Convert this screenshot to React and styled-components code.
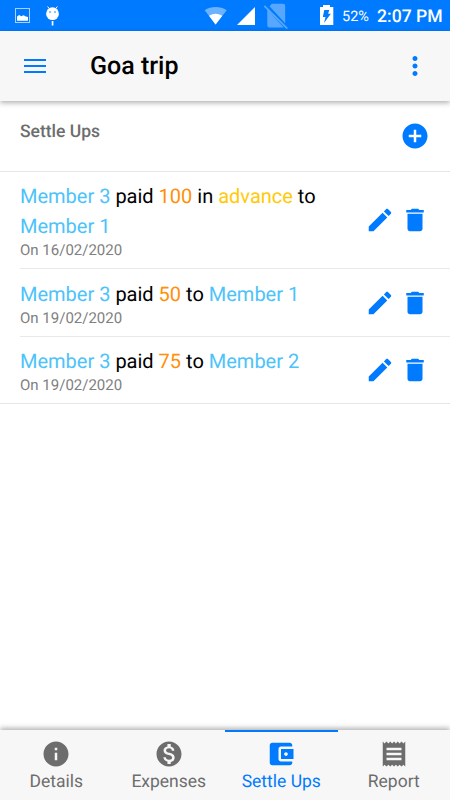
import React from "react";
import styled, { createGlobalStyle } from "styled-components";

const settleUps = [
  { from: "Member 3", amount: 100, advance: true, to: "Member 1", date: "16/02/2020" },
  { from: "Member 3", amount: 50, to: "Member 1", date: "19/02/2020" },
  { from: "Member 3", amount: 75, to: "Member 2", date: "19/02/2020" },
];

const icons = {
  add: "M12 2C6.48 2 2 6.48 2 12s4.48 10 10 10 10-4.48 10-10S17.52 2 12 2zm5 11h-4v4h-2v-4H7v-2h4V7h2v4h4v2z",
  more: "M12 8c1.1 0 2-.9 2-2s-.9-2-2-2-2 .9-2 2 .9 2 2 2zm0 2c-1.1 0-2 .9-2 2s.9 2 2 2 2-.9 2-2-.9-2-2-2zm0 6c-1.1 0-2 .9-2 2s.9 2 2 2 2-.9 2-2-.9-2-2-2z",
  edit: "M3 17.25V21h3.75L17.81 9.94l-3.75-3.75L3 17.25zM20.71 7.04c.39-.39.39-1.02 0-1.41l-2.34-2.34c-.39-.39-1.02-.39-1.41 0l-1.83 1.83 3.75 3.75 1.83-1.83z",
  trash: "M6 19c0 1.1.9 2 2 2h8c1.1 0 2-.9 2-2V7H6v12zM19 4h-3.5l-1-1h-5l-1 1H5v2h14V4z",
  info: "M12 2C6.48 2 2 6.48 2 12s4.48 10 10 10 10-4.48 10-10S17.52 2 12 2zm1 15h-2v-6h2v6zm0-8h-2V7h2v2z",
  money: "M12 2C6.48 2 2 6.48 2 12s4.48 10 10 10 10-4.48 10-10S17.52 2 12 2zm1.41 16.09V20h-2.67v-1.93c-1.71-.36-3.16-1.46-3.27-3.4h1.96c.1 1.05.82 1.87 2.65 1.87 1.96 0 2.4-.98 2.4-1.59 0-.83-.44-1.61-2.67-2.14-2.48-.6-4.18-1.62-4.18-3.67 0-1.72 1.39-2.84 3.11-3.21V4h2.67v1.95c1.86.45 2.79 1.86 2.85 3.39H14.3c-.05-1.11-.64-1.87-2.22-1.87-1.5 0-2.4.68-2.4 1.64 0 .84.65 1.39 2.67 1.94s4.18 1.36 4.18 3.85c0 1.8-1.36 3.16-3.12 3.53z",
  wallet: "M21 18v1c0 1.1-.9 2-2 2H5c-1.11 0-2-.9-2-2V5c0-1.1.89-2 2-2h14c1.1 0 2 .9 2 2v1h-9c-1.11 0-2 .9-2 2v8c0 1.1.89 2 2 2h9zm-9-2h10V8H12v8zm4-2.5c-.83 0-1.5-.67-1.5-1.5s.67-1.5 1.5-1.5 1.5.67 1.5 1.5-.67 1.5-1.5 1.5z",
  receipt: "M18 17H6v-2h12v2zm0-4H6v-2h12v2zm0-4H6V7h12v2zM3 22l1.5-1.5L6 22l1.5-1.5L9 22l1.5-1.5L12 22l1.5-1.5L15 22l1.5-1.5L18 22l1.5-1.5L21 22V2l-1.5 1.5L18 2l-1.5 1.5L15 2l-1.5 1.5L12 2l-1.5 1.5L9 2 7.5 3.5 6 2 4.5 3.5 3 2v20z",
};

const tabs = [
  { label: "Details", icon: "info" },
  { label: "Expenses", icon: "money" },
  { label: "Settle Ups", icon: "wallet", active: true },
  { label: "Report", icon: "receipt" },
];

const Icon = ({ name }) => (
  <StyledIcon viewBox="0 0 24 24">
    <path d={icons[name]} />
  </StyledIcon>
);

const StatusBar = () => (
  <StyledStatus>
    <StyledNotices width="60" height="31" viewBox="0 0 60 31">
      <rect x="15.5" y="8.5" width="14" height="14" fill="none" stroke="#a9d0ff" />
      <path d="M17 20.8v-4.3l2.2-1.6 2 1.4 2.4-1.1 2.2 1.3 2.2.4v3.9z" />
      <path d="M47.6 6.5l1.7 2.2M57.4 6.5l-1.7 2.2" stroke="#fff" />
      <ellipse cx="52.5" cy="13.7" rx="6.4" ry="6.4" />
      <circle cx="50" cy="12" r="0.8" fill="#007aff" />
      <circle cx="55" cy="12" r="0.8" fill="#007aff" />
      <path d="M51.7 21h1.7v4.5h-1.7z" />
    </StyledNotices>
    <StyledSignals width="130" height="31" viewBox="204 0 130 31">
      <path d="M204.7 10.2C211 5.8 220.3 5.8 226.7 10.2L215.6 24.5z" opacity="0.42" />
      <path d="M209 15.8Q215.6 11.6 222.3 15.8L215.6 24.5z" />
      <path d="M237 25L255 7v18z" />
      <g opacity="0.34">
        <path d="M269.5 6.2l2.4-2.4H283q2.2 0 2.2 2.2v17.2zM267.3 9.6l16.4 17.8h-14.2q-2.2 0-2.2-2.2z" />
        <path d="M264.3 5.8l23 22.8" fill="none" stroke="#fff" strokeWidth="1.8" />
      </g>
      <path d="M320 7h3V5h7v2h3.3v18H320z" />
      <path d="M324.3 10h5l-1.2 3.7h2.7l-6.8 9.3 1.5-6h-2.7z" fill="#007aff" />
    </StyledSignals>
    <StyledBattery>52%</StyledBattery>
    <StyledClock>2:07 PM</StyledClock>
  </StyledStatus>
);

const SettleUp = ({ item }) => (
  <StyledRow>
    <StyledContent>
      <div>
        <StyledText>
          <StyledMark $color="#4dc3fa">{item.from}</StyledMark> paid{" "}
          <StyledMark $color="#ff9008">{item.amount}</StyledMark>{" "}
          {item.advance && (
            <>
              in <StyledMark $color="#ffca08">advance</StyledMark>{" "}
            </>
          )}
          to <StyledMark $color="#4dc3fa">{item.to}</StyledMark>
        </StyledText>
        <StyledDate>On {item.date}</StyledDate>
      </div>
      <StyledActions>
        <StyledButton aria-label="Edit">
          <Icon name="edit" />
        </StyledButton>
        <StyledButton aria-label="Delete">
          <Icon name="trash" />
        </StyledButton>
      </StyledActions>
    </StyledContent>
  </StyledRow>
);

const App = () => {
  return (
    <StyledApp>
      <GlobalStyle />
      <StatusBar />
      <StyledToolbar>
        <StyledButton aria-label="Menu">
          <StyledMenu>
            <span />
            <span />
            <span />
          </StyledMenu>
        </StyledButton>
        <h1>Goa trip</h1>
        <StyledButton aria-label="More">
          <Icon name="more" />
        </StyledButton>
      </StyledToolbar>
      <StyledMain>
        <StyledListHeader>
          <h2>Settle Ups</h2>
          <StyledButton aria-label="Add">
            <Icon name="add" />
          </StyledButton>
        </StyledListHeader>
        <StyledList>
          {settleUps.map((item, index) => (
            <SettleUp key={index} item={item} />
          ))}
        </StyledList>
      </StyledMain>
      <StyledTabs>
        {tabs.map((tab) => (
          <StyledTab key={tab.label} $active={tab.active}>
            <Icon name={tab.icon} />
            <span>{tab.label}</span>
          </StyledTab>
        ))}
      </StyledTabs>
    </StyledApp>
  );
};

const GlobalStyle = createGlobalStyle`
  * {
    margin: 0;
    padding: 0;
    box-sizing: border-box;
  }
  body {
    font-family: Roboto, "Liberation Sans", sans-serif;
    background: white;
    text-rendering: geometricPrecision;
  }
`;

const StyledApp = styled.div`
  height: 100vh;
  display: flex;
  flex-direction: column;
  overflow: hidden;
`;

const StyledStatus = styled.div`
  height: 31px;
  flex-shrink: 0;
  display: flex;
  align-items: center;
  padding-right: 8px;
  background: #007aff;
  color: white;
`;

const StyledNotices = styled.svg`
  fill: white;
`;

const StyledSignals = styled.svg`
  margin-left: auto;
  fill: white;
`;

const StyledBattery = styled.span`
  width: 35px;
  margin-left: 8px;
  font-size: 14.5px;
  line-height: 31px;
  padding-top: 2px;
`;

const StyledClock = styled.span`
  width: 65px;
  font-size: 17.6px;
  font-weight: 500;
  line-height: 31px;
  white-space: nowrap;
  padding-top: 3px;
`;

const StyledIcon = styled.svg`
  display: block;
  width: 30px;
  height: 30px;
  fill: currentColor;
`;

const StyledButton = styled.button`
  display: flex;
  border: 0;
  background: none;
  color: #007aff;
`;

const StyledToolbar = styled.header`
  height: 70px;
  flex-shrink: 0;
  position: relative;
  display: flex;
  align-items: center;
  padding: 0 20px 0 24px;
  background: #f7f7f7;
  box-shadow: 0 2px 5px rgba(0, 0, 0, 0.3);
  h1 {
    flex: 1;
    margin-left: 44px;
    padding-top: 2px;
    font-size: 25px;
    font-weight: 500;
    line-height: 30px;
  }
`;

const StyledMenu = styled.span`
  width: 22px;
  display: grid;
  gap: 4px;
  span {
    height: 2px;
    background: #007aff;
  }
`;

const StyledMain = styled.main`
  flex: 1;
`;

const StyledListHeader = styled.div`
  height: 70.5px;
  display: flex;
  align-items: center;
  justify-content: space-between;
  padding: 0 20px;
  border-bottom: 1px solid #e6e6e6;
  h2 {
    margin-bottom: 8px;
    color: #6d6d6d;
    font-size: 17.5px;
    font-weight: 500;
    line-height: 20px;
  }
`;

const StyledList = styled.ul`
  list-style: none;
  border-bottom: 1px solid #e6e6e6;
`;

const StyledRow = styled.li`
  padding-left: 20px;
  &:last-child > div {
    border-bottom: 0;
  }
`;

const StyledContent = styled.div`
  display: flex;
  align-items: center;
  justify-content: space-between;
  padding: 9.5px 20px 9px 0;
  border-bottom: 1px solid #e9e9e9;
`;

const StyledText = styled.p`
  width: 310px;
  font-size: 20px;
  line-height: 30px;
`;

const StyledMark = styled.span`
  color: ${({ $color }) => $color};
`;

const StyledDate = styled.p`
  color: #808080;
  font-size: 15px;
  line-height: 18px;
`;

const StyledActions = styled.div`
  display: flex;
  gap: 5px;
`;

const StyledTabs = styled.nav`
  height: 70px;
  flex-shrink: 0;
  display: grid;
  grid-template-columns: repeat(4, 1fr);
  background: #f7f7f7;
  box-shadow: 0 -2px 5px rgba(0, 0, 0, 0.3);
`;

const StyledTab = styled.a`
  display: flex;
  flex-direction: column;
  align-items: center;
  padding-top: 7px;
  border-top: 2px solid ${({ $active }) => ($active ? "#007aff" : "transparent")};
  color: ${({ $active }) => ($active ? "#007aff" : "#6d6d6d")};
  font-size: 17.5px;
  line-height: 26px;
`;

export default App;
